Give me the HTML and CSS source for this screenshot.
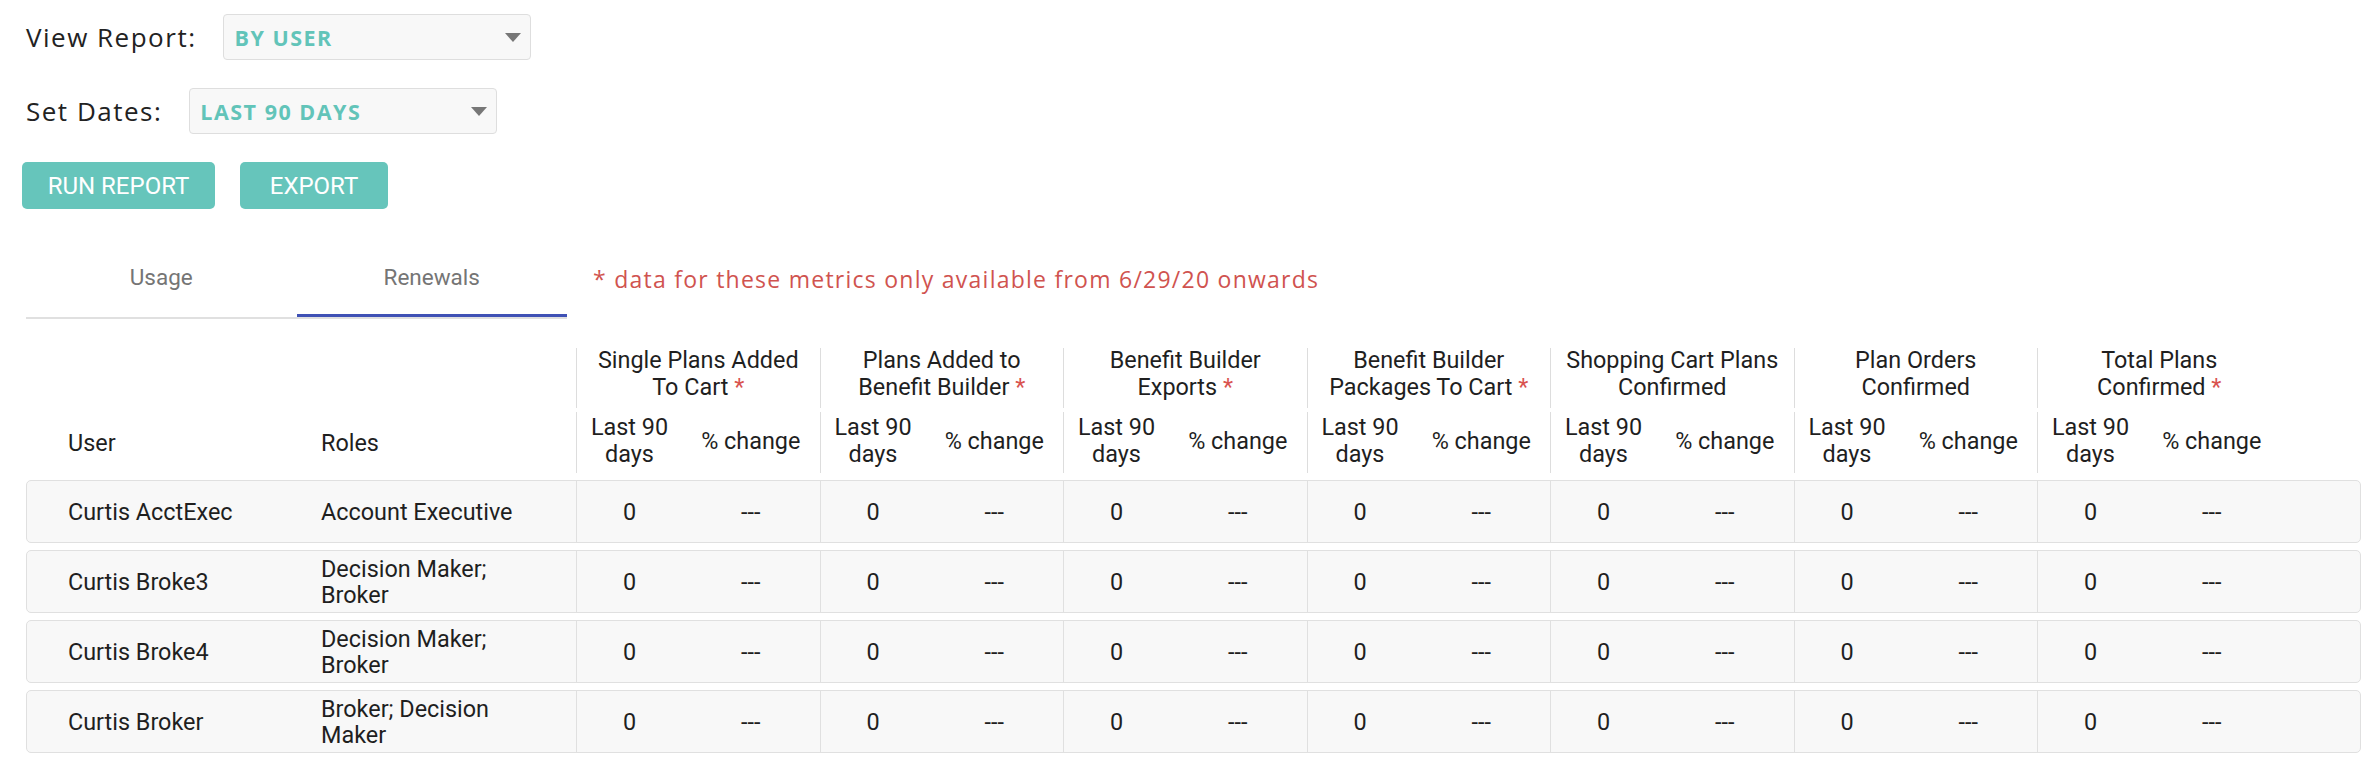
FILE: index.html
```html
<!DOCTYPE html>
<html lang="en">
<head>
<meta charset="utf-8">
<title>Report</title>
<link rel="stylesheet" href="styles.css">
</head>
<body>
<div class="page">
  <div class="filters">
    <div class="filter-row">
      <span class="filter-label">View Report:</span>
      <div class="select"><span class="select-value">BY USER</span><span class="caret"></span></div>
    </div>
    <div class="filter-row">
      <span class="filter-label">Set Dates:</span>
      <div class="select"><span class="select-value">LAST 90 DAYS</span><span class="caret"></span></div>
    </div>
    <div class="actions">
      <button class="btn btn-run">RUN REPORT</button>
      <button class="btn btn-export">EXPORT</button>
    </div>
  </div>

  <div class="tabs-bar">
    <div class="tabs">
      <div class="tab">Usage</div>
      <div class="tab active">Renewals</div>
    </div>
    <div class="note">* data for these metrics only available from 6/29/20 onwards</div>
  </div>

  <div class="report">
    <div class="thead">
      <div class="th th-user">User</div>
      <div class="th th-roles">Roles</div>
      <div class="th-group g1"><div>Single Plans Added<br>To Cart <span class="req">*</span></div></div>
      <div class="th-group g2"><div>Plans Added to<br>Benefit Builder <span class="req">*</span></div></div>
      <div class="th-group g3"><div>Benefit Builder<br>Exports <span class="req">*</span></div></div>
      <div class="th-group g4"><div>Benefit Builder<br>Packages To Cart <span class="req">*</span></div></div>
      <div class="th-group g5"><div>Shopping Cart Plans<br>Confirmed</div></div>
      <div class="th-group g6"><div>Plan Orders<br>Confirmed</div></div>
      <div class="th-group g7"><div>Total Plans<br>Confirmed <span class="req">*</span></div></div>
      <div class="th-sub g1"><span>Last 90<br>days</span><span>% change</span></div>
      <div class="th-sub g2"><span>Last 90<br>days</span><span>% change</span></div>
      <div class="th-sub g3"><span>Last 90<br>days</span><span>% change</span></div>
      <div class="th-sub g4"><span>Last 90<br>days</span><span>% change</span></div>
      <div class="th-sub g5"><span>Last 90<br>days</span><span>% change</span></div>
      <div class="th-sub g6"><span>Last 90<br>days</span><span>% change</span></div>
      <div class="th-sub g7"><span>Last 90<br>days</span><span>% change</span></div>
    </div>

    <div class="rows">
      <div class="row">
        <div class="cell cell-user">Curtis AcctExec</div>
        <div class="cell cell-roles">Account Executive</div>
        <div class="grp"><span>0</span><span>---</span></div>
        <div class="grp"><span>0</span><span>---</span></div>
        <div class="grp"><span>0</span><span>---</span></div>
        <div class="grp"><span>0</span><span>---</span></div>
        <div class="grp"><span>0</span><span>---</span></div>
        <div class="grp"><span>0</span><span>---</span></div>
        <div class="grp"><span>0</span><span>---</span></div>
        <div class="cell"></div>
      </div>
      <div class="row">
        <div class="cell cell-user">Curtis Broke3</div>
        <div class="cell cell-roles">Decision Maker; Broker</div>
        <div class="grp"><span>0</span><span>---</span></div>
        <div class="grp"><span>0</span><span>---</span></div>
        <div class="grp"><span>0</span><span>---</span></div>
        <div class="grp"><span>0</span><span>---</span></div>
        <div class="grp"><span>0</span><span>---</span></div>
        <div class="grp"><span>0</span><span>---</span></div>
        <div class="grp"><span>0</span><span>---</span></div>
        <div class="cell"></div>
      </div>
      <div class="row">
        <div class="cell cell-user">Curtis Broke4</div>
        <div class="cell cell-roles">Decision Maker; Broker</div>
        <div class="grp"><span>0</span><span>---</span></div>
        <div class="grp"><span>0</span><span>---</span></div>
        <div class="grp"><span>0</span><span>---</span></div>
        <div class="grp"><span>0</span><span>---</span></div>
        <div class="grp"><span>0</span><span>---</span></div>
        <div class="grp"><span>0</span><span>---</span></div>
        <div class="grp"><span>0</span><span>---</span></div>
        <div class="cell"></div>
      </div>
      <div class="row">
        <div class="cell cell-user">Curtis Broker</div>
        <div class="cell cell-roles">Broker; Decision Maker</div>
        <div class="grp"><span>0</span><span>---</span></div>
        <div class="grp"><span>0</span><span>---</span></div>
        <div class="grp"><span>0</span><span>---</span></div>
        <div class="grp"><span>0</span><span>---</span></div>
        <div class="grp"><span>0</span><span>---</span></div>
        <div class="grp"><span>0</span><span>---</span></div>
        <div class="grp"><span>0</span><span>---</span></div>
        <div class="cell"></div>
      </div>
      <div class="row row-partial"></div>
    </div>
  </div>
</div>
</body>
</html>
```

FILE: styles.css
```css
* { box-sizing: border-box; }

html, body {
  margin: 0;
  padding: 0;
  background: #ffffff;
}

body {
  font-family: Roboto, "Liberation Sans", sans-serif;
  color: #212121;
  overflow: hidden;
  height: 760px;
}

.page {
  padding: 14px 11px 0 26px;
  height: 760px;
  overflow: hidden;
}

/* ---------- filters ---------- */
.filters {
  display: flex;
  flex-direction: column;
}

.filter-row {
  display: flex;
  align-items: center;
  gap: 27px;
  height: 46px;
}

.filter-row + .filter-row {
  margin-top: 28px;
}

.filter-label {
  font-family: "Open Sans", "DejaVu Sans", sans-serif;
  font-size: 26px;
  letter-spacing: 1.5px;
  color: #222222;
}

.select {
  width: 308px;
  height: 46px;
  background: #f8f8f8;
  border: 1px solid #dedede;
  border-radius: 4px;
  display: flex;
  align-items: center;
  justify-content: space-between;
  padding: 0 9px 0 10px;
}

.select-value {
  font-family: "Open Sans", "DejaVu Sans", sans-serif;
  font-weight: 700;
  font-size: 21.5px;
  letter-spacing: 1.5px;
  color: #62c4b9;
}

.caret {
  width: 0;
  height: 0;
  border-left: 8px solid transparent;
  border-right: 8px solid transparent;
  border-top: 9px solid #777777;
}

.actions {
  display: flex;
  gap: 25px;
  margin-top: 28px;
  margin-left: -4px;
}

.btn {
  height: 47px;
  border: none;
  border-radius: 5px;
  background: #66c5bb;
  color: #ffffff;
  font-family: Roboto, "Liberation Sans", sans-serif;
  font-size: 24px;
  font-weight: 400;
  padding: 0;
}

.btn-run { width: 193px; }
.btn-export { width: 148px; }

/* ---------- tabs ---------- */
.tabs-bar {
  display: flex;
  align-items: center;
  margin-top: 36px;
}

.tabs {
  display: flex;
  border-bottom: 2px solid #e0e0e0;
}

.tab {
  width: 270.5px;
  height: 72px;
  display: flex;
  align-items: center;
  justify-content: center;
  font-size: 22.5px;
  color: #757575;
  border-bottom: 3px solid transparent;
  padding-bottom: 6px;
}

.tab.active {
  border-bottom-color: #3f51b5;
}

.note {
  margin-left: 26px;
  font-family: "Open Sans", "DejaVu Sans", sans-serif;
  font-size: 23px;
  letter-spacing: 1.25px;
  color: #d0534f;
  padding-bottom: 7px;
}

/* ---------- report table ---------- */
.report {
  margin-top: 29px;
  font-size: 23.4px;
  color: #1f1f1f;
}

.thead {
  display: grid;
  grid-template-columns: 295px 255px repeat(7, 243.5px) 1fr;
  grid-template-rows: 60px 61px;
  row-gap: 4px;
}

.th {
  grid-row: 2;
  display: flex;
  align-items: center;
  padding-top: 1px;
}

.th-user { grid-column: 1; padding-left: 42px; }
.th-roles { grid-column: 2; }

.th-group {
  grid-row: 1;
  border-left: 1px solid #dddddd;
  text-align: center;
  line-height: 27px;
  display: flex;
  align-items: center;
  justify-content: center;
  padding-bottom: 8px;
}

.th-sub {
  grid-row: 2;
  border-left: 1px solid #dddddd;
  display: grid;
  grid-template-columns: 105px 1fr;
  align-items: center;
  text-align: center;
  line-height: 27px;
  padding-bottom: 3px;
}

.g1 { grid-column: 3; }
.g2 { grid-column: 4; }
.g3 { grid-column: 5; }
.g4 { grid-column: 6; }
.g5 { grid-column: 7; }
.g6 { grid-column: 8; }
.g7 { grid-column: 9; }

.req { color: #d9534f; }

.rows {
  margin-top: 7px;
  display: flex;
  flex-direction: column;
  gap: 7px;
}

.row {
  display: grid;
  grid-template-columns: 294px 255px repeat(7, 243.5px) 1fr;
  height: 63px;
  flex-shrink: 0;
  background: #f8f8f8;
  border: 1px solid #e0e0e0;
  border-radius: 5px;
}

.cell {
  display: flex;
  align-items: center;
  line-height: 26px;
}

.cell-user { padding-left: 41px; }
.cell-roles { padding-right: 40px; }

.grp {
  display: grid;
  grid-template-columns: 105px 1fr;
  align-items: center;
  text-align: center;
  border-left: 1px solid #e0e0e0;
}
```
